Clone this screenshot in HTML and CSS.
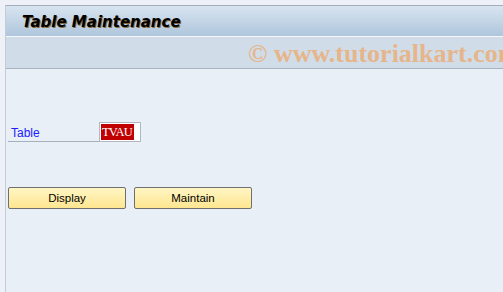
FILE: index.html
```html
<!DOCTYPE html>
<html>
<head>
<meta charset="utf-8">
<link rel="stylesheet" href="styles.css">
</head>
<body>
<div class="frame">
  <div class="topstrip"></div>
  <div class="window">
    <div class="titlebar"><span class="title">Table Maintenance</span></div>
    <div class="toolbar"><span class="watermark">© www.tutorialkart.com</span></div>
    <div class="content">
      <div class="row">
        <label class="label">Table</label>
        <div class="input"><span class="value">TVAU</span></div>
      </div>
      <div class="buttons">
        <button class="btn">Display</button>
        <button class="btn">Maintain</button>
      </div>
    </div>
  </div>
</div>
</body>
</html>
```
FILE: styles.css
```css
html, body {
  margin: 0;
  padding: 0;
  width: 503px;
  height: 292px;
  overflow: hidden;
  background: #eef2f8;
  font-family: "Liberation Sans", "DejaVu Sans", sans-serif;
}
.frame {
  display: flex;
  flex-direction: column;
  height: 292px;
}
.topstrip {
  height: 5px;
  background: #eef2f8;
}
.window {
  flex: 1;
  margin-left: 5px;
  border-left: 1px solid #c4ccd8;
  border-top: 1px solid #a3adbb;
  display: flex;
  flex-direction: column;
  background: #e8eff7;
}
.titlebar {
  height: 30px;
  background: linear-gradient(#d8e4f0, #afc6dc);
  border-bottom: 1px solid #f4f8fc;
  display: flex;
  align-items: center;
  padding-left: 16px;
}
.title {
  font-family: "DejaVu Sans", "Liberation Sans", sans-serif;
  font-weight: bold;
  font-style: italic;
  font-size: 15px;
  color: #000;
  text-shadow: 1px 1px 0 #8a6a3a;
  position: relative;
  top: 1px;
}
.toolbar {
  height: 31px;
  background: #d0dde8;
  border-bottom: 1px solid #a8b4c2;
  display: flex;
  align-items: center;
  padding-left: 242px;
  overflow: hidden;
  white-space: nowrap;
}
.watermark {
  font-family: "Liberation Serif", "DejaVu Serif", serif;
  font-weight: bold;
  font-size: 26px;
  color: #e6b58b;
  position: relative;
  top: 1px;
}
.content {
  flex: 1;
  padding: 53px 0 0 2px;
}
.row {
  display: flex;
  align-items: flex-end;
}
.label {
  width: 88px;
  padding-left: 3px;
  border-bottom: 1px solid #a8b0bc;
  font-size: 12px;
  color: #1c1cff;
  line-height: 20px;
  height: 18px;
}
.input {
  width: 39px;
  height: 18px;
  background: #fff;
  border: 1px solid #b0b8c4;
  display: flex;
  align-items: center;
  padding-left: 1px;
  box-sizing: content-box;
}
.value {
  background: #c00000;
  color: #fff;
  font-family: "Liberation Serif", "DejaVu Serif", serif;
  font-size: 12.5px;
  letter-spacing: -0.8px;
  line-height: 16px;
  padding: 0 2px 0 1px;
}
.buttons {
  display: flex;
  gap: 8px;
  margin-top: 45px;
}
.btn {
  width: 118px;
  height: 22px;
  margin: 0;
  padding: 0;
  border: 1px solid #6f6f6f;
  border-radius: 2px;
  background: linear-gradient(#fff6c4, #ffe690);
  font-family: "Liberation Sans", "DejaVu Sans", sans-serif;
  font-size: 11.5px;
  color: #000;
}
```
